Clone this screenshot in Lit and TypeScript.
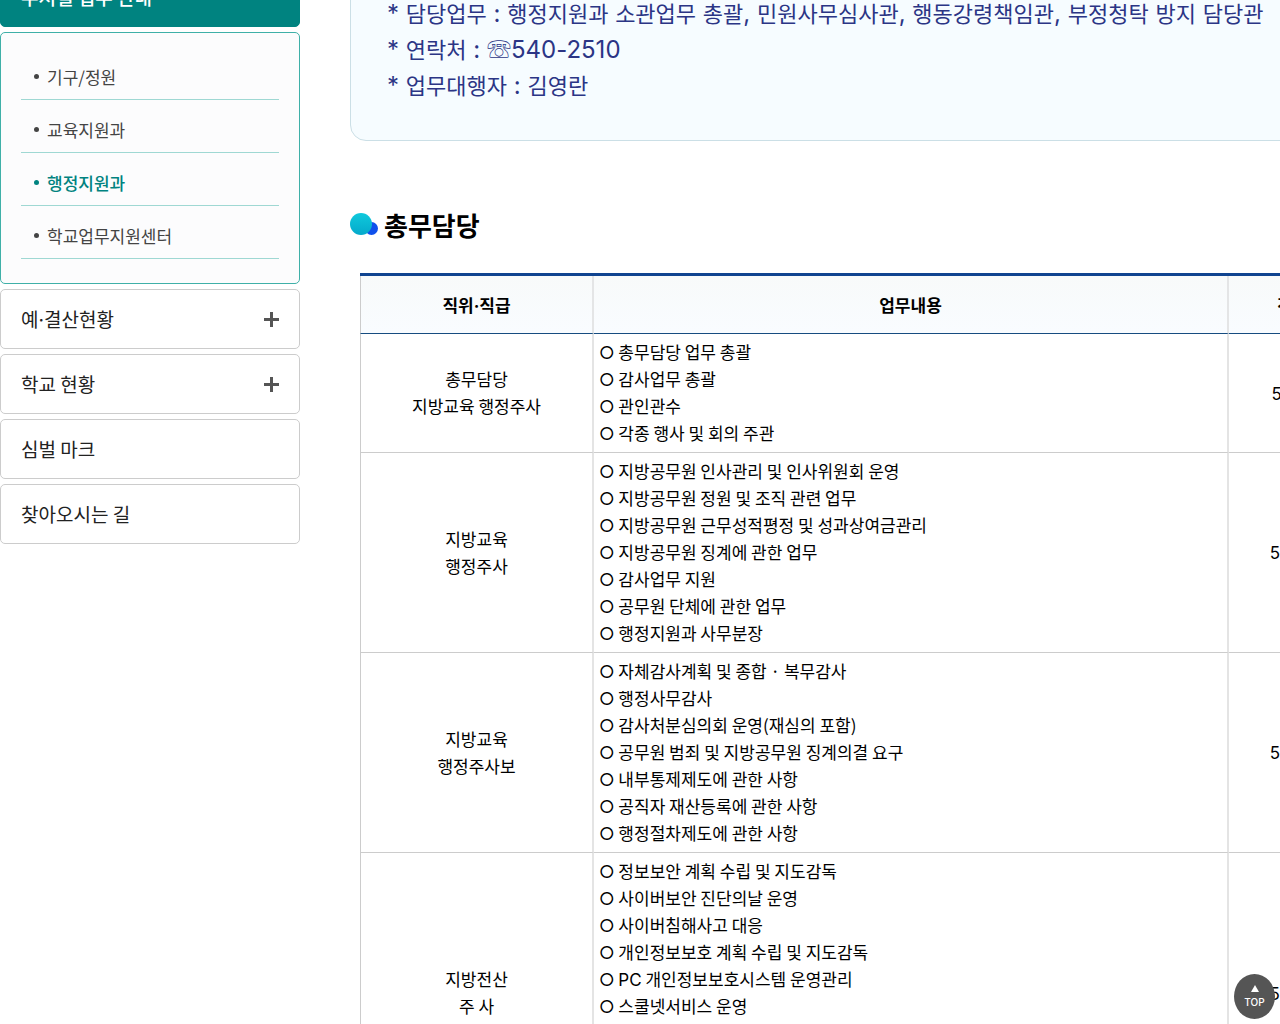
import { LitElement, html, css, nothing } from "lit";
import { customElement, property } from "lit/decorators.js";

interface MenuItem {
  label: string;
  expandable: boolean;
}

interface Duty {
  position: string[];
  tasks: string[];
  phone: string;
  tall?: boolean;
}

const SUB_MENU = ["기구/정원", "교육지원과", "행정지원과", "학교업무지원센터"];
const CURRENT = "행정지원과";

const MENU: MenuItem[] = [
  { label: "예·결산현황", expandable: true },
  { label: "학교 현황", expandable: true },
  { label: "심벌 마크", expandable: false },
  { label: "찾아오시는 길", expandable: false },
];

const NOTICE = [
  "* 담당업무 : 행정지원과 소관업무 총괄, 민원사무심사관, 행동강령책임관, 부정청탁 방지 담당관",
  "* 연락처 : ☏540-2510",
  "* 업무대행자 : 김영란",
];

const DUTIES: Duty[] = [
  {
    position: ["총무담당", "지방교육 행정주사"],
    tasks: ["총무담당 업무 총괄", "감사업무 총괄", "관인관수", "각종 행사 및 회의 주관"],
    phone: "540-2511",
  },
  {
    position: ["지방교육", "행정주사"],
    tasks: [
      "지방공무원 인사관리 및 인사위원회 운영",
      "지방공무원 정원 및 조직 관련 업무",
      "지방공무원 근무성적평정 및 성과상여금관리",
      "지방공무원 징계에 관한 업무",
      "감사업무 지원",
      "공무원 단체에 관한 업무",
      "행정지원과 사무분장",
    ],
    phone: "540-2512",
  },
  {
    position: ["지방교육", "행정주사보"],
    tasks: [
      "자체감사계획 및 종합 · 복무감사",
      "행정사무감사",
      "감사처분심의회 운영(재심의 포함)",
      "공무원 범죄 및 지방공무원 징계의결 요구",
      "내부통제제도에 관한 사항",
      "공직자 재산등록에 관한 사항",
      "행정절차제도에 관한 사항",
    ],
    phone: "540-2513",
  },
  {
    position: ["지방전산", "주 사"],
    tasks: [
      "정보보안 계획 수립 및 지도감독",
      "사이버보안 진단의날 운영",
      "사이버침해사고 대응",
      "개인정보보호 계획 수립 및 지도감독",
      "PC 개인정보보호시스템 운영관리",
      "스쿨넷서비스 운영",
    ],
    phone: "540-2514",
    tall: true,
  },
];

/* Sets Latin letters, digits and symbols in Inter beside the Korean face. */
const mixed = (text: string) =>
  text
    .split(/((?<! )·|○|[A-Z]+|[\d-]+)/)
    .map((part, i) => (i % 2 ? html`<span class="latin">${part}</span>` : part));

/* Sets runs of Hangul in the Korean face inside an Inter line. */
const hangul = (text: string) =>
  text
    .split(/([가-힣]+)/)
    .map((part, i) => (i % 2 ? html`<span class="hangul">${part}</span>` : part));

const latinStyles = css`
  .latin {
    font-family: Inter, sans-serif;
    line-height: 1;
  }
`;

@customElement("side-menu")
export class SideMenu extends LitElement {
  static styles = [
    latinStyles,
    css`
      :host {
        display: block;
        font-family: "Noto Sans CJK KR", "Noto Sans", sans-serif;
      }
      .menu {
        display: flex;
        flex-direction: column;
        gap: 5px;
      }
      .entry {
        box-sizing: border-box;
        display: flex;
        align-items: center;
        justify-content: space-between;
        width: 100%;
        height: 60px;
        padding: 0 20px;
        border: 1px solid #ccc;
        border-radius: 5px;
        background: #fff;
        color: #222;
        font: inherit;
        font-size: 19px;
        line-height: 28px;
        text-align: left;
        text-decoration: none;
        cursor: pointer;
      }
      .open {
        border-color: #008380;
        background: #008380;
        color: #fff;
        font-weight: 500;
      }
      .plus {
        width: 15px;
        height: 15px;
        fill: #555;
      }
      .sub {
        margin: 0;
        padding: 14px 20px 24px;
        border: 1px solid #3fb0a8;
        border-radius: 5px;
        background: #fcfcfd;
        list-style: none;
      }
      .sub-item {
        border-bottom: 1px solid #9fd8d3;
      }
      .sub-link {
        display: flex;
        align-items: center;
        gap: 8px;
        padding: 16px 0 9px 13px;
        color: #444;
        font-size: 17px;
        line-height: 27px;
        text-decoration: none;
      }
      .sub-link::before {
        content: "";
        width: 5px;
        height: 5px;
        border-radius: 50%;
        background: currentColor;
      }
      .current {
        color: #008380;
        font-weight: 500;
      }
    `,
  ];

  render() {
    return html`
      <nav class="menu">
        <button class="entry open" type="button" aria-expanded="true">부서별 업무 안내</button>
        <ul class="sub">
          ${SUB_MENU.map(
            (label) => html`<li class="sub-item">
              <a
                class="sub-link ${label === CURRENT ? "current" : ""}"
                href="#"
                aria-current=${label === CURRENT ? "page" : nothing}
                >${label}</a
              >
            </li>`
          )}
        </ul>
        ${MENU.map((item) =>
          item.expandable
            ? html`<button class="entry" type="button" aria-expanded="false">
                <span>${mixed(item.label)}</span>
                <svg class="plus" viewBox="0 0 15 15" aria-hidden="true">
                  <path d="M6 0h3v6h6v3H9v6H6V9H0V6h6z" />
                </svg>
              </button>`
            : html`<a class="entry" href="#">${item.label}</a>`
        )}
      </nav>
    `;
  }
}

@customElement("duty-table")
export class DutyTable extends LitElement {
  @property({ attribute: false }) duties: Duty[] = [];

  static styles = [
    latinStyles,
    css`
      :host {
        display: block;
        color: #000;
        font-family: "Noto Sans CJK KR", "Noto Sans", sans-serif;
        font-size: 17px;
        line-height: 27px;
      }
      .table {
        width: 100%;
        border-top: 3px solid #104490;
        border-spacing: 0;
        table-layout: fixed;
      }
      .col-position {
        width: 234px;
      }
      .col-phone {
        width: 161px;
      }
      .head {
        height: 57px;
        padding: 0;
        border-bottom: 1px solid #164c80;
        border-right: 2px solid #e4e5e6;
        background: linear-gradient(#f8fafa, #f9fcff);
        font-weight: 700;
      }
      .cell {
        padding: 4px 5px 6px;
        border-bottom: 1px solid #ccc;
        border-right: 2px solid #e4e4e4;
        text-align: center;
      }
      .head:first-child,
      .cell:first-child {
        border-left: 1px solid #ccc;
      }
      .tall {
        height: 270px;
      }
      .tasks {
        text-align: left;
        vertical-align: top;
      }
      .list {
        margin: 0;
        padding: 0;
        list-style: none;
      }
    `,
  ];

  render() {
    return html`
      <table class="table">
        <colgroup>
          <col class="col-position" />
          <col />
          <col class="col-phone" />
        </colgroup>
        <thead>
          <tr>
            <th class="head" scope="col">${mixed("직위·직급")}</th>
            <th class="head" scope="col">업무내용</th>
            <th class="head" scope="col">전화번호</th>
          </tr>
        </thead>
        <tbody>
          ${this.duties.map(
            (duty) => html`<tr>
              <td class="cell ${duty.tall ? "tall" : ""}">
                ${duty.position.map((line) => html`<div>${line}</div>`)}
              </td>
              <td class="cell tasks">
                <ul class="list">
                  ${duty.tasks.map((task) => html`<li>${mixed(`○ ${task}`)}</li>`)}
                </ul>
              </td>
              <td class="cell">${mixed(duty.phone)}</td>
            </tr>`
          )}
        </tbody>
      </table>
    `;
  }
}

@customElement("app-root")
export class AppRoot extends LitElement {
  static styles = css`
    :host {
      display: block;
      height: 100vh;
      overflow: hidden;
      background: #fff;
      font-family: "Noto Sans CJK KR", "Noto Sans", sans-serif;
    }
    .page {
      display: grid;
      grid-template-columns: 300px minmax(0, 1fr);
      gap: 50px;
      min-width: 1400px;
      margin-top: -33px;
    }
    .notice {
      padding: 28px 36px 36px;
      border: 1px solid #cbdfe6;
      border-radius: 16px;
      background: #f6fcff;
      color: #2b3585;
      font-family: Inter, "Noto Sans CJK KR", sans-serif;
      font-size: 24px;
      line-height: 36px;
    }
    .hangul {
      font-family: "Noto Sans CJK KR", sans-serif;
      font-size: 22px;
      line-height: 1;
    }
    .line {
      height: 36px;
      margin: 0;
    }
    .title {
      display: flex;
      align-items: center;
      gap: 6px;
      margin: 64px 0 28px;
      color: #000;
      font-size: 26px;
      font-weight: 700;
      line-height: 40px;
    }
    .mark {
      width: 28px;
      height: 24px;
    }
    .duties {
      margin: 0 10px;
    }
    .top {
      position: fixed;
      right: 5px;
      bottom: 5px;
      display: flex;
      flex-direction: column;
      align-items: center;
      justify-content: center;
      gap: 4px;
      width: 41px;
      height: 45px;
      padding: 0;
      border: 0;
      border-radius: 50%;
      background: #555;
      color: #fff;
      font-family: Inter, sans-serif;
      font-size: 10px;
      font-weight: 500;
      line-height: 12px;
      cursor: pointer;
    }
    .arrow {
      width: 8px;
      height: 7px;
      fill: #fff;
    }
  `;

  private toTop() {
    window.scrollTo({ top: 0 });
  }

  render() {
    return html`
      <div class="page">
        <side-menu></side-menu>
        <main>
          <section class="notice">
            ${NOTICE.map((line) => html`<p class="line">${hangul(line)}</p>`)}
          </section>
          <h2 class="title">
            <svg class="mark" viewBox="0 0 28 24" aria-hidden="true">
              <defs>
                <linearGradient id="aqua" x1="0" y1="0" x2="0" y2="1">
                  <stop offset="0" stop-color="#0fc9dc" />
                  <stop offset="1" stop-color="#04a9cb" />
                </linearGradient>
              </defs>
              <circle cx="21.5" cy="15.5" r="6.5" fill="#0f50ec" />
              <circle cx="11" cy="11" r="11" fill="url(#aqua)" />
            </svg>
            총무담당
          </h2>
          <duty-table class="duties" .duties=${DUTIES}></duty-table>
        </main>
      </div>
      <button class="top" type="button" @click=${this.toTop}>
        <svg class="arrow" viewBox="0 0 8 7" aria-hidden="true"><path d="M4 0l4 7H0z" /></svg>
        TOP
      </button>
    `;
  }
}
